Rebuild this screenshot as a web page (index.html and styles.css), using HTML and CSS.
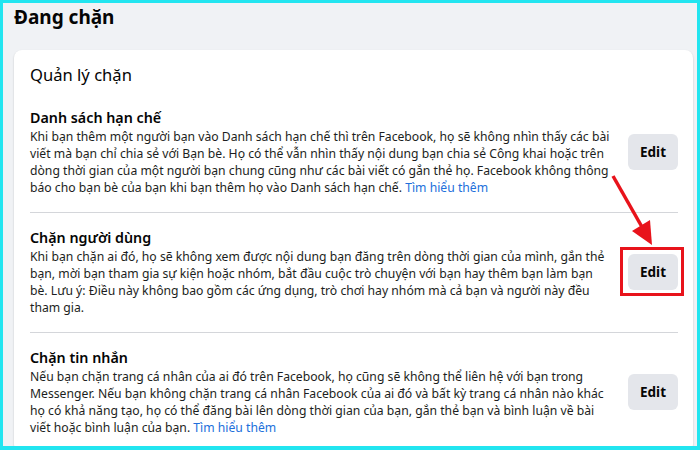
FILE: index.html
```html
<!DOCTYPE html>
<html>
<head>
    <meta charset="utf-8">
    <title>Đang chặn</title>
    <link rel="stylesheet" href="styles.css">
</head>
<body>
    <div class="frame">
        <h1 class="page-title">Đang chặn</h1>

        <div class="card">
            <h2 class="card-title">Quản lý chặn</h2>

            <div class="block-row">
                <div class="block-text">
                    <h3>Danh sách hạn chế</h3>
                    <p>Khi bạn thêm một người bạn vào Danh sách hạn chế thì trên Facebook, họ sẽ không nhìn thấy các bài<br>viết mà bạn chỉ chia sẻ với Bạn bè. Họ có thể vẫn nhìn thấy nội dung bạn chia sẻ Công khai hoặc trên<br>dòng thời gian của một người bạn chung cũng như các bài viết có gắn thẻ họ. Facebook không thông<br>báo cho bạn bè của bạn khi bạn thêm họ vào Danh sách hạn chế. <a href="#">Tìm hiểu thêm</a></p>
                </div>
                <button class="edit-btn">Edit</button>
            </div>

            <div class="block-row">
                <div class="block-text">
                    <h3>Chặn người dùng</h3>
                    <p>Khi bạn chặn ai đó, họ sẽ không xem được nội dung bạn đăng trên dòng thời gian của mình, gắn thẻ<br>bạn, mời bạn tham gia sự kiện hoặc nhóm, bắt đầu cuộc trò chuyện với bạn hay thêm bạn làm bạn<br>bè. Lưu ý: Điều này không bao gồm các ứng dụng, trò chơi hay nhóm mà cả bạn và người này đều<br>tham gia.</p>
                </div>
                <button class="edit-btn highlighted">Edit</button>
            </div>

            <div class="block-row">
                <div class="block-text">
                    <h3>Chặn tin nhắn</h3>
                    <p>Nếu bạn chặn trang cá nhân của ai đó trên Facebook, họ cũng sẽ không thể liên hệ với bạn trong<br>Messenger. Nếu bạn không chặn trang cá nhân Facebook của ai đó và bất kỳ trang cá nhân nào khác<br>họ có khả năng tạo, họ có thể đăng bài lên dòng thời gian của bạn, gắn thẻ bạn và bình luận về bài<br>viết hoặc bình luận của bạn. <a href="#">Tìm hiểu thêm</a></p>
                </div>
                <button class="edit-btn">Edit</button>
            </div>
        </div>

        <!-- annotation arrow pointing at the second Edit button -->
        <svg class="annotation" width="700" height="450" viewBox="0 0 700 450">
            <line x1="613" y1="176" x2="642" y2="227" stroke="#e8131b" stroke-width="3.5"/>
            <polygon points="652,245 650,220 632,231" fill="#e8131b"/>
        </svg>
    </div>
</body>
</html>
```

FILE: styles.css
```css
* {
    margin: 0;
    padding: 0;
    box-sizing: border-box;
}

body {
    font-family: 'Noto Sans', 'Open Sans', sans-serif;
    background: #22e5f0;
    color: #050505;
}

.frame {
    position: relative;
    width: 700px;
    height: 450px;
    overflow: hidden;
    background: #f0f2f5;
    border: 3px solid #22e5f0;
    border-bottom-width: 4px;
    padding-top: 2px;
}

.page-title {
    font-size: 19px;
    font-weight: 700;
    line-height: 24px;
    margin: 0 0 21px 11px;
}

.card {
    background: #fff;
    margin: 0 4px 0 11px;
    border-radius: 8px;
    box-shadow: 0 1px 2px rgba(0, 0, 0, 0.2);
    padding: 14px 15px 0 16px;
}

.card-title {
    font-size: 16.6px;
    font-weight: 400;
    line-height: 22px;
    margin-bottom: 7px;
}

.block-row {
    display: flex;
    align-items: center;
    padding: 15px 0 16px;
    border-bottom: 1px solid #d4d6da;
}

.block-row:last-child {
    border-bottom: none;
}

.block-text {
    flex: 1;
    min-width: 0;
}

.block-text h3 {
    font-size: 14.3px;
    font-weight: 600;
    line-height: 20px;
}

.block-text p {
    font-size: 12.2px;
    line-height: 17px;
    color: #1c1e21;
    white-space: nowrap;
}

.block-text a {
    color: #216fdb;
    text-decoration: none;
}

.edit-btn {
    position: relative;
    width: 50px;
    height: 36px;
    margin-left: 14px;
    flex-shrink: 0;
    border: none;
    border-radius: 6px;
    background: #e4e6eb;
    color: #050505;
    font-family: inherit;
    font-size: 13.5px;
    font-weight: 700;
}

/* red annotation box */
.edit-btn.highlighted::after {
    content: "";
    position: absolute;
    left: -8px;
    right: -6px;
    top: -7px;
    bottom: -6px;
    border: 3px solid #e8131b;
}

.annotation {
    position: absolute;
    left: -3px;
    top: -3px;
    pointer-events: none;
}
```
